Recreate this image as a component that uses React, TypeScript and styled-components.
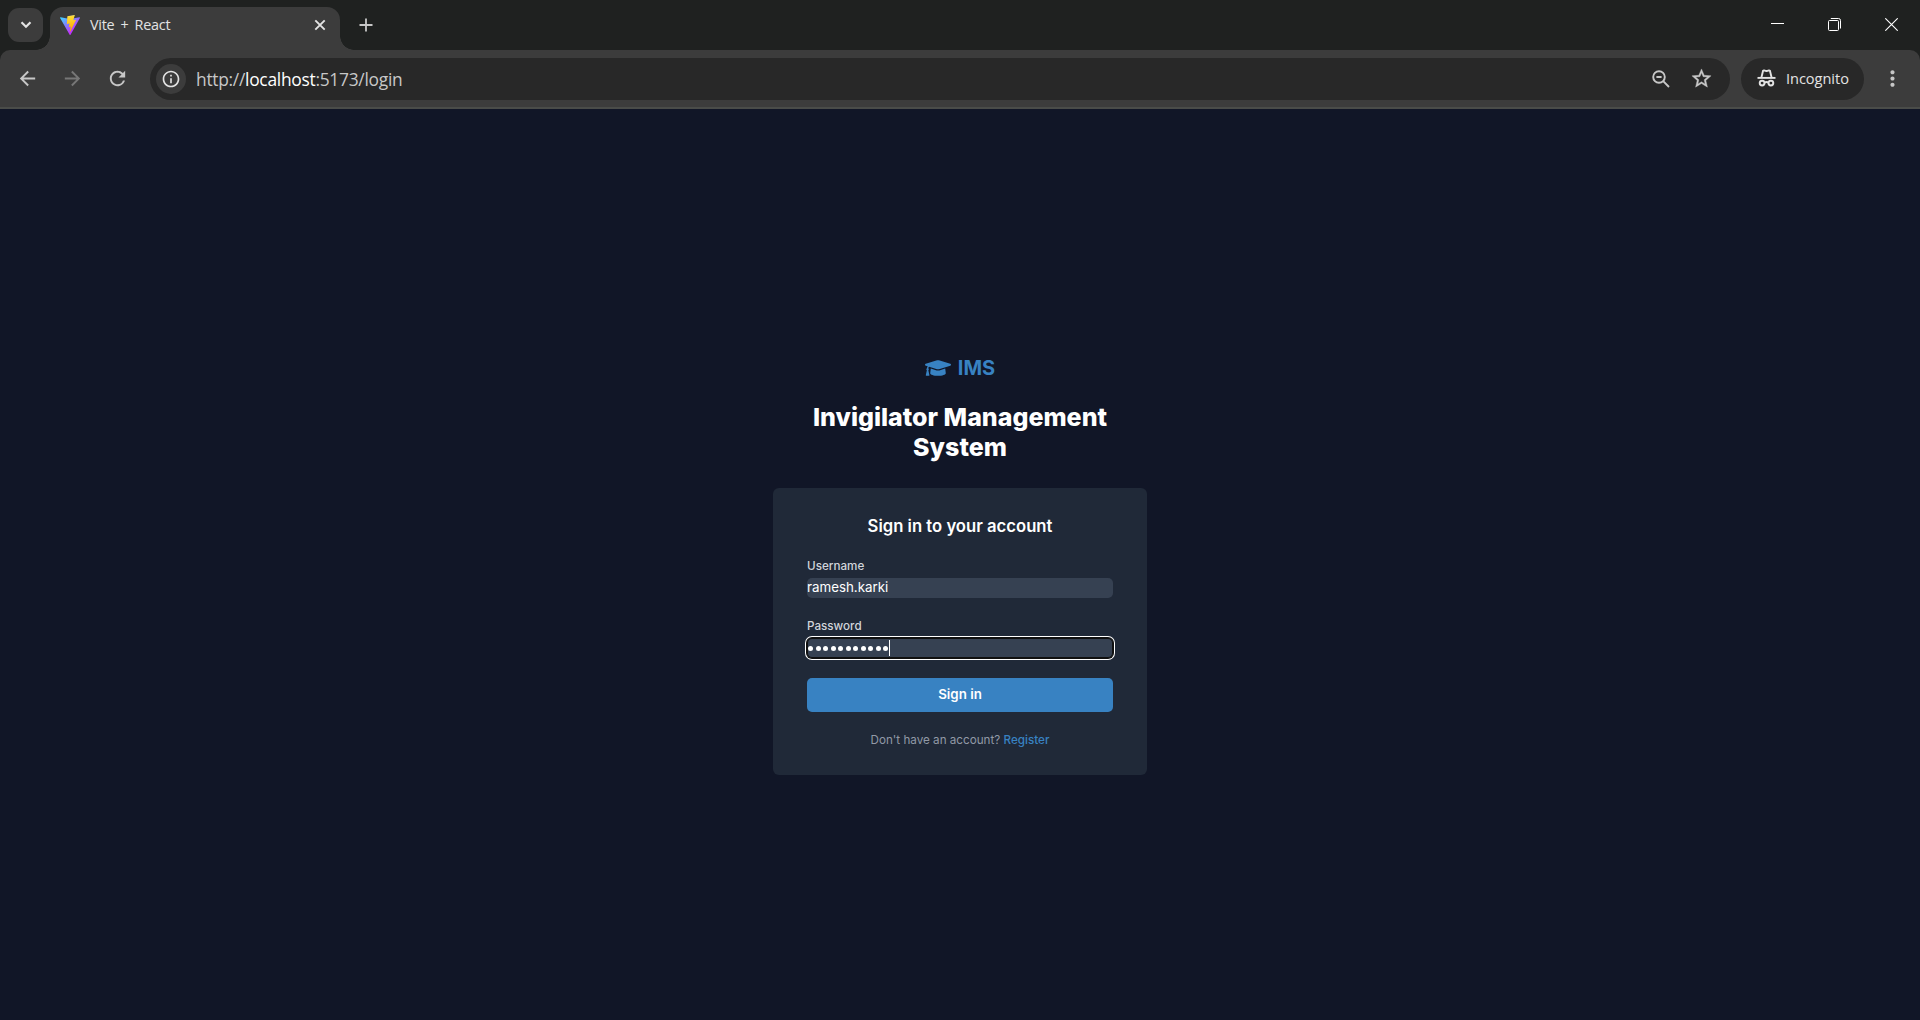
import React from "react";
import styled, { createGlobalStyle, css } from "styled-components";
import { FaGraduationCap } from "react-icons/fa";
import { MdArrowBack, MdArrowForward, MdRefresh, MdInfoOutline, MdStarOutline, MdMoreVert } from "react-icons/md";

const GlobalStyle = createGlobalStyle`
  * { box-sizing: border-box; }
  body { margin: 0; background: #111627; overflow: hidden; }
`;

const UI_FONT = `"Open Sans", "Noto Sans", sans-serif`;
const PAGE_FONT = `Inter, "Liberation Sans", sans-serif`;

const Window = styled.div`
  display: flex;
  flex-direction: column;
  width: 1920px;
  height: 1020px;
  background: #1f2120;
  font-family: ${UI_FONT};
`;

const TabStrip = styled.header`
  display: flex;
  height: 50px;
  flex: none;
  padding-left: 8px;
  background: #1f2120;
`;

const TabSearch = styled.button`
  display: grid;
  place-items: center;
  width: 35px;
  height: 34px;
  margin: 8px 7px 0 0;
  padding: 0;
  border: 0;
  border-radius: 11px;
  background: #3c3c3c;
  color: #e3e3e3;
`;

const footCurve = css`
  content: "";
  position: absolute;
  bottom: 0;
  width: 14px;
  height: 14px;
`;

const Tab = styled.div`
  position: relative;
  display: flex;
  align-items: center;
  width: 290px;
  height: 43px;
  margin-top: 7px;
  padding: 0 12px 7px 10px;
  border-radius: 13px 13px 0 0;
  background: #3c3c3c;
  color: #e3e3e3;
  &::before {
    ${footCurve}
    left: -14px;
    background: radial-gradient(circle at 0 0, transparent 13.5px, #3c3c3c 14px);
  }
  &::after {
    ${footCurve}
    right: -14px;
    background: radial-gradient(circle at 100% 0, transparent 13.5px, #3c3c3c 14px);
  }
`;

const TabTitle = styled.span`
  flex: 1;
  margin-left: 10px;
  font-size: 14.4px;
  line-height: 20px;
  letter-spacing: -0.25px;
  word-spacing: 2.6px;
`;

const IconButton = styled.button<{ $w?: number; $dim?: boolean }>`
  display: grid;
  place-items: center;
  width: ${(p) => p.$w ?? 34}px;
  height: 34px;
  flex: none;
  padding: 0;
  border: 0;
  background: none;
  color: ${(p) => (p.$dim ? "#777777" : "#c7c7c7")};
`;

const NewTab = styled(IconButton)`
  margin: 8px 0 0 9px;
`;

const WindowControls = styled.div`
  display: flex;
  margin-left: auto;
`;

const WindowControl = styled.button`
  display: grid;
  place-items: center;
  width: 57px;
  height: 49px;
  padding: 0;
  border: 0;
  background: none;
  color: #ffffff;
`;

const Toolbar = styled.nav`
  display: flex;
  align-items: center;
  height: 59px;
  flex: none;
  padding: 0 9px 0 10px;
  border-bottom: 2px solid #4a4c49;
  border-radius: 10px 10px 0 0;
  background: #3c3c3c;
`;

const NavButtons = styled.div`
  display: flex;
  gap: 11px;
  width: 140px;
`;

const AddressBar = styled.div`
  display: flex;
  align-items: center;
  width: 1580px;
  height: 42px;
  padding: 0 9px 0 6px;
  border-radius: 21px;
  background: #282828;
`;

const SiteInfo = styled.button`
  display: grid;
  place-items: center;
  width: 30px;
  height: 30px;
  margin-right: 10px;
  padding: 0;
  border: 0;
  border-radius: 50%;
  background: #3c3c3c;
  color: #e3e3e3;
`;

const Url = styled.span`
  flex: 1;
  padding-top: 1px;
  font-size: 17.4px;
  line-height: 24px;
  letter-spacing: -0.28px;
  color: #c7c7c7;
`;

const Host = styled.span`
  color: #ffffff;
`;

const IncognitoChip = styled.div`
  display: flex;
  align-items: center;
  gap: 10px;
  width: 123px;
  height: 42px;
  margin-left: 11px;
  padding: 0 0 1px 16px;
  border-radius: 21px;
  background: #282828;
  color: #e3e3e3;
  font-size: 14.6px;
  letter-spacing: -0.05px;
`;

const MenuButton = styled(IconButton)`
  margin-left: auto;
`;

const Page = styled.main`
  display: flex;
  flex: 1;
  flex-direction: column;
  align-items: center;
  padding-top: 246px;
  background: #111627;
  font-family: ${PAGE_FONT};
`;

const Brand = styled.div`
  display: flex;
  align-items: center;
  gap: 7px;
  height: 26px;
  color: #3882c2;
  font-size: 20px;
  font-weight: 700;
  line-height: 26px;
`;

const Heading = styled.h1`
  width: 373px;
  margin: 21px 0 26px;
  padding: 0 33px;
  color: #ffffff;
  font-size: 25px;
  font-weight: 800;
  line-height: 30px;
  text-align: center;
`;

const Card = styled.form`
  display: flex;
  flex-direction: column;
  width: 374px;
  height: 287px;
  padding: 26px 34px 0;
  border-radius: 6px;
  background: #202938;
`;

const CardTitle = styled.h2`
  margin: 0 0 16px;
  color: #ffffff;
  font-size: 16.67px;
  font-weight: 600;
  line-height: 24px;
  text-align: center;
`;

const Label = styled.label`
  height: 24px;
  color: #d1d5db;
  font-size: 11.67px;
  font-weight: 500;
  line-height: 24px;
`;

const fieldBox = css`
  display: flex;
  align-items: center;
  width: 306px;
  height: 20px;
  flex: none;
  border-radius: 5px;
  background: #364152;
  color: #ffffff;
`;

const UserField = styled.div`
  ${fieldBox}
  margin-bottom: 16px;
  padding-bottom: 2px;
  font-size: 13.33px;
  line-height: 18px;
`;

const PasswordField = styled.div`
  ${fieldBox}
  margin-bottom: 20px;
  padding-left: 1px;
  box-shadow: inset 0 0 0 1px #101010, 0 0 0 1px #101010, 0 0 0 2px #ffffff;
`;

const Dot = styled.i`
  width: 5px;
  height: 5px;
  margin-right: 2.5px;
  border-radius: 50%;
  background: #ffffff;
`;

const Caret = styled.i`
  width: 1px;
  height: 16px;
  margin-left: -2px;
  background: #ffffff;
`;

const Submit = styled.button`
  height: 34px;
  flex: none;
  padding: 0 0 2px;
  border: 0;
  border-radius: 5px;
  background: #3882c2;
  color: #ffffff;
  font-family: ${PAGE_FONT};
  font-size: 13.33px;
  font-weight: 600;
`;

const Footnote = styled.p`
  margin: 18px 0 0;
  color: #9199a6;
  font-size: 11.67px;
  line-height: 20px;
  text-align: center;
`;

const RegisterLink = styled.a`
  color: #3882c2;
  font-weight: 500;
`;

const ViteLogo = () => (
  <svg width="20" height="20" viewBox="0 0 256 257">
    <defs>
      <linearGradient id="viteBody" x1="-.8%" x2="57.6%" y1="7.7%" y2="78.4%">
        <stop offset="0" stopColor="#41D1FF" />
        <stop offset="1" stopColor="#BD34FE" />
      </linearGradient>
      <linearGradient id="viteBolt" x1="43.4%" x2="50.3%" y1="2.2%" y2="89%">
        <stop offset="0" stopColor="#FFEA83" />
        <stop offset=".083" stopColor="#FFDD35" />
        <stop offset="1" stopColor="#FFA800" />
      </linearGradient>
    </defs>
    <path fill="url(#viteBody)" d="M255.153 37.938 134.897 252.976c-2.483 4.44-8.862 4.466-11.382.048L.875 37.958c-2.746-4.814 1.371-10.646 6.827-9.67l120.385 21.517a6.537 6.537 0 0 0 2.322-.004l117.867-21.483c5.438-.991 9.574 4.796 6.877 9.62Z" />
    <path fill="url(#viteBolt)" d="M185.432.063 96.44 17.501a3.268 3.268 0 0 0-2.634 3.014l-5.474 92.456a3.268 3.268 0 0 0 3.997 3.378l24.777-5.718c2.318-.535 4.413 1.507 3.936 3.838l-7.361 36.047c-.495 2.426 1.782 4.5 4.151 3.78l15.304-4.649c2.372-.72 4.652 1.36 4.15 3.788l-11.698 56.621c-.732 3.542 3.979 5.473 5.943 2.437l1.313-2.028 72.516-144.72c1.215-2.423-.88-5.186-3.54-4.672l-25.505 4.922c-2.396.462-4.435-1.77-3.759-4.114l16.646-57.705c.677-2.35-1.37-4.583-3.769-4.113Z" />
  </svg>
);

const ZoomOutIcon = () => (
  <svg width="18" height="18" viewBox="0 0 18 18" fill="none" stroke="currentColor" strokeWidth="1.9">
    <circle cx="7" cy="7" r="5.8" />
    <path d="M4.4 7h5.2M11.2 11.2 17 17" />
  </svg>
);

const IncognitoIcon = () => (
  <svg width="19" height="18" viewBox="0 0 19 18" fill="none" stroke="currentColor" strokeWidth="1.9">
    <path d="M.5 8.9h18" />
    <path d="M4.4 8.4 6 2.1c.1-.6.6-.8 1.1-.7l1.6.4c.6.2 1 .2 1.6 0l1.600-.4c.5-.1 1 .1 1.100.7l1.600 6.300" />
    <circle cx="5.100" cy="14.100" r="2.400" />
    <circle cx="13.900" cy="14.100" r="2.400" />
    <path d="M7.400 13.800c1.200-.9 3-.9 4.200 0" />
  </svg>
);

export default function App() {
  return (
    <Window>
      <GlobalStyle />
      <TabStrip>
        <TabSearch aria-label="Search tabs">
          <svg width="12" height="8" viewBox="0 0 12 8" fill="none" stroke="currentColor" strokeWidth="2.2">
            <path d="m1.5 1.3 4.5 4.5 4.5-4.5" />
          </svg>
        </TabSearch>
        <Tab>
          <ViteLogo />
          <TabTitle>Vite + React</TabTitle>
          <svg width="16" height="16" viewBox="0 0 16 16" stroke="currentColor" strokeWidth="1.9">
            <path d="m3.3 3.3 9.4 9.4m0-9.4-9.4 9.4" />
          </svg>
        </Tab>
        <NewTab aria-label="New tab">
          <svg width="14" height="14" viewBox="0 0 14 14" stroke="currentColor" strokeWidth="1.8">
            <path d="M7 .5v13M.5 7h13" />
          </svg>
        </NewTab>
        <WindowControls>
          <WindowControl aria-label="Minimize">
            <svg width="13" height="13" viewBox="0 0 13 13" stroke="currentColor">
              <path d="M0 5.5h13" />
            </svg>
          </WindowControl>
          <WindowControl aria-label="Restore">
            <svg width="14" height="13" viewBox="0 0 14 13" fill="none" stroke="currentColor">
              <rect x=".5" y="2.5" width="10" height="10" rx="1" />
              <path d="M2.800.5H10.500a2 2 0 0 1 2 2v8" />
            </svg>
          </WindowControl>
          <WindowControl aria-label="Close">
            <svg width="13" height="13" viewBox="0 0 13 13" stroke="currentColor" strokeWidth="1.1">
              <path d="m.3.3 12.400 12.400m0-12.400L.3 12.700" />
            </svg>
          </WindowControl>
        </WindowControls>
      </TabStrip>
      <Toolbar>
        <NavButtons>
          <IconButton aria-label="Back"><MdArrowBack size={23} /></IconButton>
          <IconButton aria-label="Forward" $dim><MdArrowForward size={23} /></IconButton>
          <IconButton aria-label="Reload"><MdRefresh size={23} /></IconButton>
        </NavButtons>
        <AddressBar>
          <SiteInfo aria-label="Site information"><MdInfoOutline size={20} /></SiteInfo>
          <Url>http://<Host>localhost</Host>:5173/login</Url>
          <IconButton $w={40} aria-label="Zoom"><ZoomOutIcon /></IconButton>
          <IconButton $w={40} aria-label="Bookmark"><MdStarOutline size={23} stroke="currentColor" strokeWidth={0.4} /></IconButton>
        </AddressBar>
        <IncognitoChip>
          <IncognitoIcon />
          <span>Incognito</span>
        </IncognitoChip>
        <MenuButton $w={38} aria-label="Menu"><MdMoreVert size={25} /></MenuButton>
      </Toolbar>
      <Page>
        <Brand>
          <FaGraduationCap size={26} />
          <span>IMS</span>
        </Brand>
        <Heading>Invigilator Management System</Heading>
        <Card>
          <CardTitle>Sign in to your account</CardTitle>
          <Label>Username</Label>
          <UserField>ramesh.karki</UserField>
          <Label>Password</Label>
          <PasswordField>
            {Array.from({ length: 11 }, (_, i) => <Dot key={i} />)}
            <Caret />
          </PasswordField>
          <Submit type="button">Sign in</Submit>
          <Footnote>Don't have an account? <RegisterLink>Register</RegisterLink></Footnote>
        </Card>
      </Page>
    </Window>
  );
}
